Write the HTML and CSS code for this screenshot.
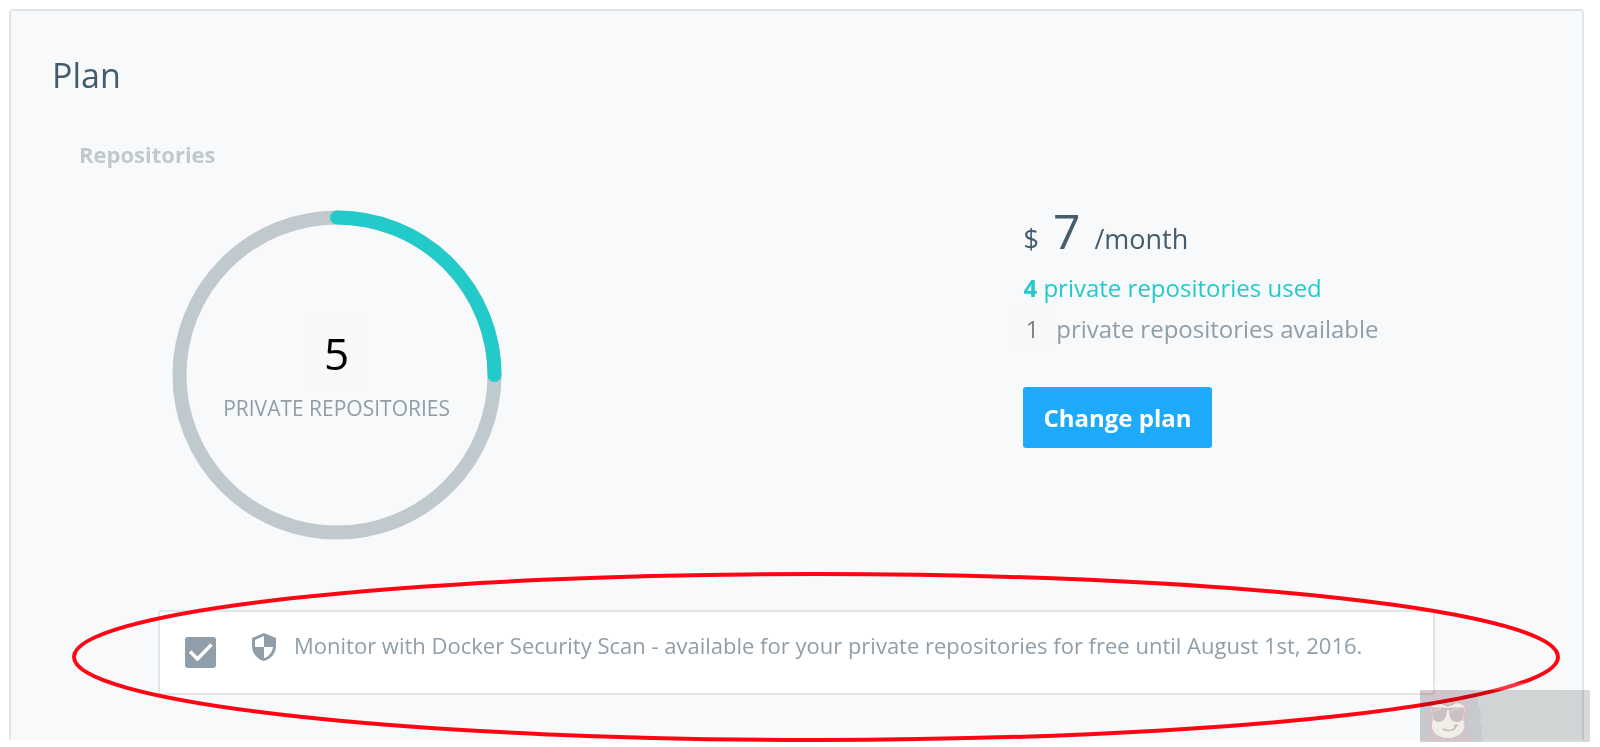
FILE: index.html
```html
<!DOCTYPE html>
<html lang="en">
<head>
  <meta charset="UTF-8">
  <meta name="viewport" content="width=device-width, initial-scale=1.0">
  <title>Plan</title>
  <link rel="stylesheet" href="styles.css">
</head>
<body>

<main class="panel">
  <h1>Plan</h1>

  <section class="repositories">
    <h2>Repositories</h2>

    <div class="usage">
      <div class="donut">
        <svg class="donut-ring" viewBox="0 0 330 330" aria-hidden="true">
          <circle cx="165" cy="165" r="157.5" fill="none" stroke="#c0c9ce" stroke-width="14"/>
          <path d="M165 7.5A157.5 157.5 0 0 1 322.500 165" fill="none" stroke="#22cbca" stroke-width="14" stroke-linecap="round"/>
        </svg>
        <div class="donut-text">
          <span class="donut-count">5</span>
          <span class="donut-label">PRIVATE REPOSITORIES</span>
        </div>
      </div>

      <div class="plan">
        <p class="price">$ <span class="amount">7</span> /month</p>
        <p class="used"><strong>4</strong> private repositories used</p>
        <p class="available"><span class="available-count">1</span>private repositories available</p>
        <button type="button" class="change-plan">Change plan</button>
      </div>
    </div>

    <label class="notice" for="scan">
      <span class="check">
        <input type="checkbox" id="scan" checked>
        <svg viewBox="0 0 31 31" aria-hidden="true"><path d="M5 14.500L12.500 22L26.500 7.500" fill="none" stroke="#fff" stroke-width="3.500"/></svg>
      </span>
      <svg class="shield" viewBox="0 0 24 28" aria-hidden="true">
        <path d="M12 0L24 5V13C24 20 19 26 12 28C5 26 0 20 0 13V5Z" fill="#8f9ea8"/>
        <path d="M12 3V14H3V7Z M12 14H21C20.500 19 17 23.500 12 25.200Z" fill="#fff"/>
      </svg>
      <span class="notice-text">Monitor with Docker Security Scan - available for your private repositories for free until August 1st, 2016.</span>
    </label>
  </section>

  <svg class="highlight" viewBox="0 0 1488 170" preserveAspectRatio="none" aria-hidden="true">
    <ellipse cx="744" cy="85" rx="742" ry="83" fill="none" stroke="#ff0514" stroke-width="4"/>
    <rect x="1345" y="111" width="143" height="7" fill="#fff" fill-opacity="0.2"/>
  </svg>

  <div class="watermark">
    <svg viewBox="0 0 62 52" aria-hidden="true">
      <path d="M0 0H54C57 3 58 8 58 14C58 19 62 21 61 25C61 28 59 29 60 33C63 38 62 45 62 52H0Z" fill="#cdced1"/>
      <path d="M0 0H20C34 0 43 5 45 12C50 16 51 22 49 28L46 34L51 52H6L9 36C6 31 5 24 10 17L11 13C8 9 4 6 0 4Z" fill="#d8c8cb"/>
      <path d="M11 18C13 13 20 13 26 15L28 16L30 15C35 12 43 13 45 18L43 30C48 40 39 48 28 48C16 48 9 40 13 30Z" fill="#f8f4eb"/>
      <path d="M10 17C16 18 22 17 28 18C34 17 40 18 46 17L44 20C44 28 42 32 37 32C31 32 29 27 29 20H27C27 27 24 32 19 32C13 32 12 26 12 20Z" fill="#d2c6c8"/>
      <path d="M23 39C29 42 35 40 36 36M34 36L38 35M20 13L28 16L35 13" fill="none" stroke="#cdbfc2" stroke-width="1.500"/>
      <path d="M13 22C16 20 18 19 21 19M30 22C33 20 36 19 39 19" fill="none" stroke="#e8e0dc"/>
    </svg>
  </div>
</main>

</body>
</html>
```
FILE: styles.css
```css
* {
  box-sizing: border-box;
}
body {
  margin: 0;
  padding: 9px 16px 7px 9px;
  font-family: 'Open Sans', sans-serif;
  font-size: 24px;
  color: #8f9ea8;
  background-color: #fff;
}
h1, h2, p {
  margin: 0;
}
.panel {
  position: relative;
  padding: 38px 72px 45px 41px;
  border: 2px solid #e0e5e8;
  border-bottom: none;
  border-radius: 4px 4px 0 0;
  background-color: #f7f9fb;
}
h1 {
  font-size: 34px;
  font-weight: 400;
  line-height: 52px;
  color: #445d6e;
}
.repositories {
  margin-top: 37px;
  padding-left: 27px;
}
h2 {
  font-size: 22px;
  font-weight: 700;
  line-height: 32px;
  color: #c0c9ce;
}
.usage {
  display: grid;
  grid-template-columns: 36% 34%;
  justify-content: space-between;
  margin-top: 40px;
}
.donut {
  display: grid;
  justify-items: center;
}
.donut-ring, .donut-text {
  grid-area: 1 / 1;
}
.donut-ring {
  width: 330px;
  height: 330px;
}
.donut-text {
  display: flex;
  flex-direction: column;
  align-items: center;
  padding-top: 106px;
}
.donut-count {
  padding: 0 14px;
  font-size: 44px;
  line-height: 74px;
  color: #000;
  background-color: #f8f8f8;
}
.donut-label {
  font-size: 21px;
  line-height: 36px;
}
.price {
  margin-bottom: 8px;
  font-size: 27px;
  line-height: 42px;
  color: #445d6e;
}
.amount {
  margin: 0 7px;
  font-size: 48px;
}
.used {
  line-height: 40px;
  color: #22cbca;
}
.available {
  line-height: 42px;
}
.available-count {
  display: inline-block;
  margin: 0 5px 0 -10px;
  padding: 0 12px;
  color: #808080;
  background-color: #f8f8f8;
}
.change-plan {
  margin-top: 37px;
  padding: 0 20px;
  border: none;
  border-radius: 3px;
  font-family: inherit;
  font-size: 24px;
  font-weight: 700;
  line-height: 61px;
  color: #fff;
  background-color: #1eaafa;
  cursor: pointer;
}
.notice {
  display: flex;
  align-items: flex-start;
  margin: 70px 75px 0 79px;
  padding: 21px 24px 25px 25px;
  border: 2px solid #e0e5e8;
  border-radius: 3px;
  font-size: 22px;
  background-color: #fff;
}
.check {
  display: grid;
  margin-top: 4px;
}
.check input, .check svg {
  grid-area: 1 / 1;
  width: 31px;
  height: 31px;
  margin: 0;
}
.check input {
  appearance: none;
  border-radius: 3px;
  background-color: #8f9ea8;
}
.check svg {
  pointer-events: none;
}
.shield {
  flex: none;
  width: 24px;
  height: 28px;
  margin: 0 18px 0 36px;
}
.notice-text {
  line-height: 24px;
}
/* hand drawn ring round the notice */
.highlight {
  position: absolute;
  left: 61px;
  bottom: -2px;
  width: calc(100% - 83px);
  height: 170px;
  pointer-events: none;
}
.watermark {
  position: absolute;
  right: -8px;
  bottom: -2px;
  width: 170px;
  height: 52px;
  background-color: #d8d9d9;
  mix-blend-mode: multiply;
}
.watermark svg {
  display: block;
  width: 62px;
  height: 52px;
}
```
